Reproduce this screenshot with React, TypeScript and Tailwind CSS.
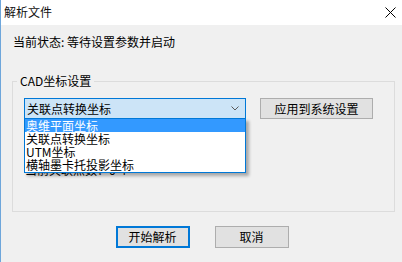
import React from "react";

const font = { fontFamily: "'Noto Sans CJK SC', 'Noto Sans', sans-serif" };

export default function App() {
  return (
    <div
      className="w-[402px] h-[262px] bg-[#f0f0f0] border-l border-[#6ea6db] flex flex-col text-[12px] leading-[14px] text-black overflow-hidden"
      style={font}
    >
      {/* title bar */}
      <div className="h-[25px] bg-white flex items-center justify-between pl-[3px] pr-[6px] pb-[1px]">
        <span className="text-[#111]">解析文件</span>
        <svg width="11" height="11" viewBox="0 0 11 11" className="mt-[1px]">
          <path d="M0.5 0.5 L10.5 10.5 M10.5 0.5 L0.5 10.5" stroke="#000" strokeWidth="1" fill="none" />
        </svg>
      </div>

      {/* status */}
      <div className="mt-[10px] ml-[12px]">当前状态: 等待设置参数并启动</div>

      {/* group box */}
      <div className="mt-[32px] ml-[11px] w-[383px] h-[131px] border border-[#dcdcdc] flex flex-col">
        <div className="-mt-[8px] ml-[4px] px-[3px] w-fit bg-[#f0f0f0]">CAD坐标设置</div>

        <div className="mt-[10px] pl-[11px] flex items-start">
          <div className="relative">
            <div className="w-[222px] h-[21px] border border-[#0078d7] bg-[#cce4f7] flex items-center justify-between pl-[2px] pr-[6px]">
              <span>关联点转换坐标</span>
              <svg width="8" height="5" viewBox="0 0 8 5">
                <path d="M0.5 0.5 L4 4 L7.5 0.5" stroke="#5a5a5a" strokeWidth="1" fill="none" />
              </svg>
            </div>
            {/* dropdown list */}
            <div className="absolute left-0 top-[20px] w-[222px] border border-[#0078d7] bg-white shadow-[3px_3px_3px_rgba(0,0,0,0.3)] z-10 flex flex-col leading-[13px]">
              <div className="h-[13px] bg-[#3399ff] text-white pl-[1px]">奥维平面坐标</div>
              <div className="h-[13px] pl-[1px]">关联点转换坐标</div>
              <div className="h-[13px] pl-[1px]">UTM坐标</div>
              <div className="h-[14px] pl-[1px]">横轴墨卡托投影坐标</div>
            </div>
          </div>
          <button className="ml-[14px] w-[113px] h-[21px] border border-[#adadad] bg-[#e1e1e1] flex items-center justify-center">
            应用到系统设置
          </button>
        </div>

        <div className="mt-[44px] pl-[12px]">当前关联点数：0 个</div>
      </div>

      {/* bottom buttons */}
      <div className="mt-[14px] flex justify-center gap-[25px] pl-[1px]">
        <button className="w-[74px] h-[22px] border-2 border-[#0078d7] bg-[#e1e1e1] flex items-center justify-center">
          开始解析
        </button>
        <button className="w-[74px] h-[22px] border border-[#adadad] bg-[#e1e1e1] flex items-center justify-center">
          取消
        </button>
      </div>
    </div>
  );
}
